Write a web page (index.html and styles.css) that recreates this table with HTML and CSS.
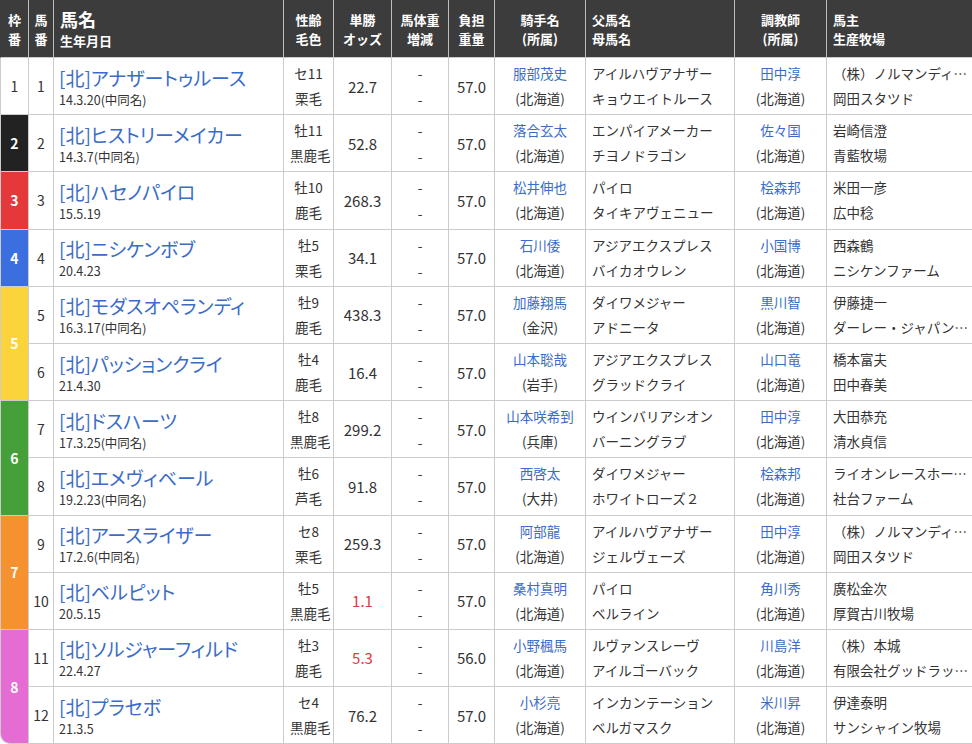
FILE: index.html
```html
<!DOCTYPE html>
<html lang="ja">
<head>
<meta charset="utf-8">
<link rel="stylesheet" href="styles.css">
</head>
<body>
<div class="wrap">
<table class="race">
<colgroup>
<col class="c-waku"><col class="c-num"><col class="c-name"><col class="c-sex"><col class="c-odds"><col class="c-wt"><col class="c-load"><col class="c-jockey"><col class="c-sire"><col class="c-trainer"><col class="c-owner">
</colgroup>
<thead>
<tr>
<th>枠<br>番</th>
<th>馬<br>番</th>
<th class="l"><span class="big">馬名</span><br>生年月日</th>
<th>性齢<br>毛色</th>
<th>単勝<br>オッズ</th>
<th>馬体重<br>増減</th>
<th>負担<br>重量</th>
<th>騎手名<br>(所属)</th>
<th class="l">父馬名<br>母馬名</th>
<th>調教師<br>(所属)</th>
<th class="l">馬主<br>生産牧場</th>
</tr>
</thead>
<tbody>
<tr>
<td class="waku w1">1</td><td class="num">1</td>
<td class="name"><div class="hn">[北]アナザートゥルース</div><div class="dob">14.3.20(中同名)</div></td>
<td class="two"><div>セ11</div><div>栗毛</div></td>
<td class="odds">22.7</td>
<td class="dash"><div>-</div><div>-</div></td>
<td class="load">57.0</td>
<td class="two"><div class="lk">服部茂史</div><div>(北海道)</div></td>
<td class="two l"><div>アイルハヴアナザー</div><div>キョウエイトルース</div></td>
<td class="two"><div class="lk">田中淳</div><div>(北海道)</div></td>
<td class="two l owner"><div>（株）ノルマンディーサラブレッドレーシング</div><div>岡田スタツド</div></td>
</tr>
<tr>
<td class="waku w2">2</td><td class="num">2</td>
<td class="name"><div class="hn">[北]ヒストリーメイカー</div><div class="dob">14.3.7(中同名)</div></td>
<td class="two"><div>牡11</div><div>黒鹿毛</div></td>
<td class="odds">52.8</td>
<td class="dash"><div>-</div><div>-</div></td>
<td class="load">57.0</td>
<td class="two"><div class="lk">落合玄太</div><div>(北海道)</div></td>
<td class="two l"><div>エンパイアメーカー</div><div>チヨノドラゴン</div></td>
<td class="two"><div class="lk">佐々国</div><div>(北海道)</div></td>
<td class="two l owner"><div>岩崎信澄</div><div>青藍牧場</div></td>
</tr>
<tr>
<td class="waku w3">3</td><td class="num">3</td>
<td class="name"><div class="hn">[北]ハセノパイロ</div><div class="dob">15.5.19</div></td>
<td class="two"><div>牡10</div><div>鹿毛</div></td>
<td class="odds">268.3</td>
<td class="dash"><div>-</div><div>-</div></td>
<td class="load">57.0</td>
<td class="two"><div class="lk">松井伸也</div><div>(北海道)</div></td>
<td class="two l"><div>パイロ</div><div>タイキアヴェニュー</div></td>
<td class="two"><div class="lk">桧森邦</div><div>(北海道)</div></td>
<td class="two l owner"><div>米田一彦</div><div>広中稔</div></td>
</tr>
<tr>
<td class="waku w4">4</td><td class="num">4</td>
<td class="name"><div class="hn">[北]ニシケンボブ</div><div class="dob">20.4.23</div></td>
<td class="two"><div>牡5</div><div>栗毛</div></td>
<td class="odds">34.1</td>
<td class="dash"><div>-</div><div>-</div></td>
<td class="load">57.0</td>
<td class="two"><div class="lk">石川倭</div><div>(北海道)</div></td>
<td class="two l"><div>アジアエクスプレス</div><div>バイカオウレン</div></td>
<td class="two"><div class="lk">小国博</div><div>(北海道)</div></td>
<td class="two l owner"><div>西森鶴</div><div>ニシケンファーム</div></td>
</tr>
<tr>
<td class="waku w5" rowspan="2">5</td><td class="num">5</td>
<td class="name"><div class="hn">[北]モダスオペランディ</div><div class="dob">16.3.17(中同名)</div></td>
<td class="two"><div>牡9</div><div>鹿毛</div></td>
<td class="odds">438.3</td>
<td class="dash"><div>-</div><div>-</div></td>
<td class="load">57.0</td>
<td class="two"><div class="lk">加藤翔馬</div><div>(金沢)</div></td>
<td class="two l"><div>ダイワメジャー</div><div>アドニータ</div></td>
<td class="two"><div class="lk">黒川智</div><div>(北海道)</div></td>
<td class="two l owner"><div>伊藤捷一</div><div>ダーレー・ジャパン・ファーム</div></td>
</tr>
<tr>
<td class="num">6</td>
<td class="name"><div class="hn">[北]パッションクライ</div><div class="dob">21.4.30</div></td>
<td class="two"><div>牡4</div><div>鹿毛</div></td>
<td class="odds">16.4</td>
<td class="dash"><div>-</div><div>-</div></td>
<td class="load">57.0</td>
<td class="two"><div class="lk">山本聡哉</div><div>(岩手)</div></td>
<td class="two l"><div>アジアエクスプレス</div><div>グラッドクライ</div></td>
<td class="two"><div class="lk">山口竜</div><div>(北海道)</div></td>
<td class="two l owner"><div>橋本富夫</div><div>田中春美</div></td>
</tr>
<tr>
<td class="waku w6" rowspan="2">6</td><td class="num">7</td>
<td class="name"><div class="hn">[北]ドスハーツ</div><div class="dob">17.3.25(中同名)</div></td>
<td class="two"><div>牡8</div><div>黒鹿毛</div></td>
<td class="odds">299.2</td>
<td class="dash"><div>-</div><div>-</div></td>
<td class="load">57.0</td>
<td class="two"><div class="lk">山本咲希到</div><div>(兵庫)</div></td>
<td class="two l"><div>ウインバリアシオン</div><div>バーニングラブ</div></td>
<td class="two"><div class="lk">田中淳</div><div>(北海道)</div></td>
<td class="two l owner"><div>大田恭充</div><div>清水貞信</div></td>
</tr>
<tr>
<td class="num">8</td>
<td class="name"><div class="hn">[北]エメヴィベール</div><div class="dob">19.2.23(中同名)</div></td>
<td class="two"><div>牡6</div><div>芦毛</div></td>
<td class="odds">91.8</td>
<td class="dash"><div>-</div><div>-</div></td>
<td class="load">57.0</td>
<td class="two"><div class="lk">西啓太</div><div>(大井)</div></td>
<td class="two l"><div>ダイワメジャー</div><div>ホワイトローズ２</div></td>
<td class="two"><div class="lk">桧森邦</div><div>(北海道)</div></td>
<td class="two l owner"><div>ライオンレースホース（株）</div><div>社台ファーム</div></td>
</tr>
<tr>
<td class="waku w7" rowspan="2">7</td><td class="num">9</td>
<td class="name"><div class="hn">[北]アースライザー</div><div class="dob">17.2.6(中同名)</div></td>
<td class="two"><div>セ8</div><div>栗毛</div></td>
<td class="odds">259.3</td>
<td class="dash"><div>-</div><div>-</div></td>
<td class="load">57.0</td>
<td class="two"><div class="lk">阿部龍</div><div>(北海道)</div></td>
<td class="two l"><div>アイルハヴアナザー</div><div>ジェルヴェーズ</div></td>
<td class="two"><div class="lk">田中淳</div><div>(北海道)</div></td>
<td class="two l owner"><div>（株）ノルマンディーサラブレッドレーシング</div><div>岡田スタツド</div></td>
</tr>
<tr>
<td class="num">10</td>
<td class="name"><div class="hn">[北]ベルピット</div><div class="dob">20.5.15</div></td>
<td class="two"><div>牡5</div><div>黒鹿毛</div></td>
<td class="odds red">1.1</td>
<td class="dash"><div>-</div><div>-</div></td>
<td class="load">57.0</td>
<td class="two"><div class="lk">桑村真明</div><div>(北海道)</div></td>
<td class="two l"><div>パイロ</div><div>ベルライン</div></td>
<td class="two"><div class="lk">角川秀</div><div>(北海道)</div></td>
<td class="two l owner"><div>廣松金次</div><div>厚賀古川牧場</div></td>
</tr>
<tr>
<td class="waku w8 last" rowspan="2">8</td><td class="num">11</td>
<td class="name"><div class="hn">[北]ソルジャーフィルド</div><div class="dob">22.4.27</div></td>
<td class="two"><div>牡3</div><div>鹿毛</div></td>
<td class="odds red">5.3</td>
<td class="dash"><div>-</div><div>-</div></td>
<td class="load">56.0</td>
<td class="two"><div class="lk">小野楓馬</div><div>(北海道)</div></td>
<td class="two l"><div>ルヴァンスレーヴ</div><div>アイルゴーバック</div></td>
<td class="two"><div class="lk">川島洋</div><div>(北海道)</div></td>
<td class="two l owner"><div>（株）本城</div><div>有限会社グッドラックファーム</div></td>
</tr>
<tr>
<td class="num">12</td>
<td class="name"><div class="hn">[北]プラセボ</div><div class="dob">21.3.5</div></td>
<td class="two"><div>セ4</div><div>黒鹿毛</div></td>
<td class="odds">76.2</td>
<td class="dash"><div>-</div><div>-</div></td>
<td class="load">57.0</td>
<td class="two"><div class="lk">小杉亮</div><div>(北海道)</div></td>
<td class="two l"><div>インカンテーション</div><div>ベルガマスク</div></td>
<td class="two"><div class="lk">米川昇</div><div>(北海道)</div></td>
<td class="two l owner"><div>伊達泰明</div><div>サンシャイン牧場</div></td>
</tr>
</tbody>
</table>
</div>
</body>
</html>
```

FILE: styles.css
```css
html, body {
  margin: 0;
  padding: 0;
  background: #ffffff;
  overflow: hidden;
}
body {
  font-family: "Noto Sans CJK JP", "Noto Sans", sans-serif;
  color: #333333;
  font-size: 13.5px;
}
.wrap {
  width: 990px;
}
.race {
  border-collapse: separate;
  border-spacing: 0;
  table-layout: fixed;
  width: 990px;
}
.c-waku { width: 29px; }
.c-num { width: 25px; }
.c-name { width: 230px; }
.c-sex { width: 50px; }
.c-odds { width: 58px; }
.c-wt { width: 57px; }
.c-load { width: 46px; }
.c-jockey { width: 91px; }
.c-sire { width: 149px; }
.c-trainer { width: 92px; }
.c-owner { width: 163px; }

th, td {
  box-sizing: border-box;
  padding: 0 6px;
  border-right: 1px solid #cccccc;
  border-bottom: 1px solid #cccccc;
  text-align: center;
  vertical-align: middle;
}
th {
  background: #3c3c3c;
  color: #ffffff;
  font-weight: bold;
  font-size: 13px;
  line-height: 19px;
  height: 58px;
  border-right-color: #bdbdbd;
  padding: 0 4px;
}
th.l { text-align: left; padding-left: 6px; }
th .big { font-size: 18px; line-height: 22px; }
th:first-child, td.waku { border-left: 1px solid #cccccc; }
th:first-child { border-left-color: #3c3c3c; }

td { height: 57.2px; }
td.l { text-align: left; }
td.waku {
  padding: 0;
  font-size: 14px;
  font-weight: bold;
  color: #ffffff;
}
td.waku.w1 { background: #ffffff; color: #333333; font-weight: normal; }
td.waku.w2 { background: #222222; }
td.waku.w3 { background: #e5383b; }
td.waku.w4 { background: #3b6fe0; }
td.waku.w5 { background: #fbd43c; }
td.waku.w6 { background: #45a03a; }
td.waku.w7 { background: #f5912f; }
td.waku.w8 { background: #e56cd2; }
td.last { border-bottom-left-radius: 10px; }
td.num { padding: 0; font-size: 14px; }

td.name { text-align: left; padding-left: 5px; }
.hn {
  font-size: 19px;
  line-height: 27px;
  color: #3a6cc8;
  font-feature-settings: "palt";
  white-space: nowrap;
}
.dob {
  font-size: 12.5px;
  line-height: 18px;
}
.two div {
  line-height: 25px;
  white-space: nowrap;
}
.owner div {
  overflow: hidden;
  text-overflow: ellipsis;
  width: 136px;
}
.lk { color: #3a6cc8; }
td.odds { font-size: 15px; padding: 0; }
td.odds.red { color: #e0393e; }
td.load { font-size: 15px; padding: 0; }
.dash div { line-height: 26px; }
```
